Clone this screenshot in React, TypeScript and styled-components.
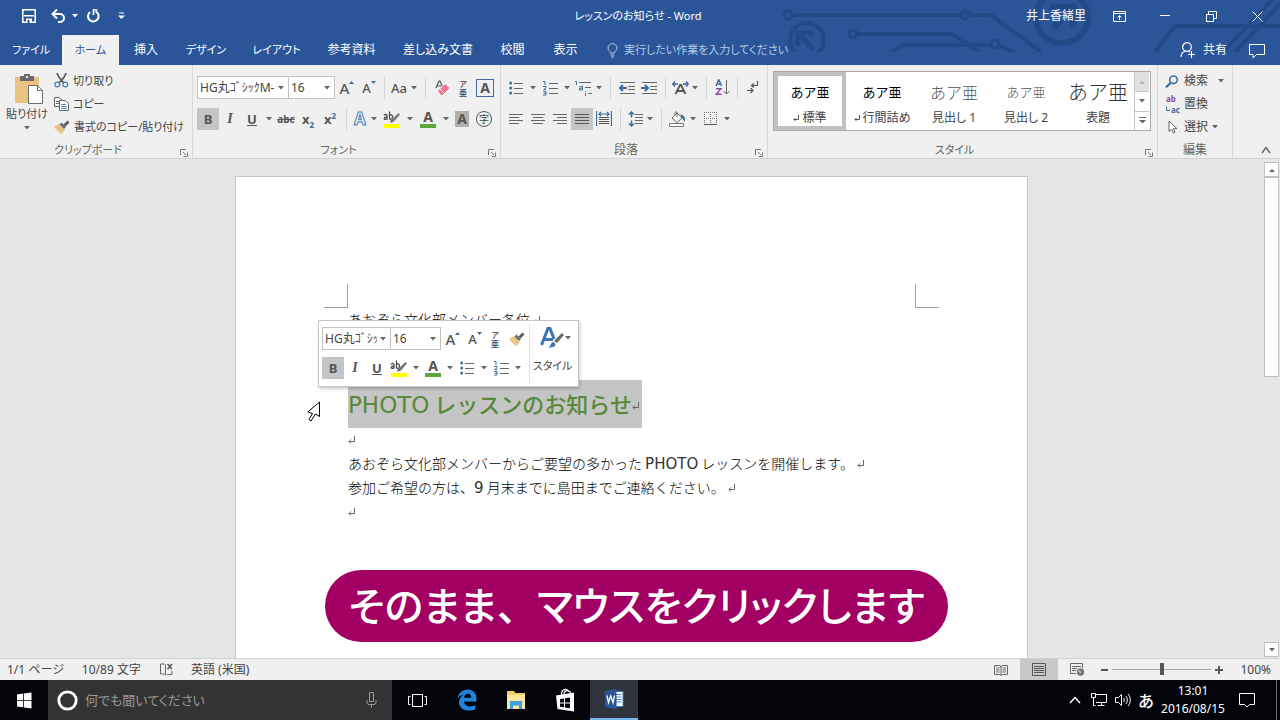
import React from "react";
import styled, { createGlobalStyle } from "styled-components";

const uiFont = `"Noto Sans", "Noto Sans CJK JP", sans-serif`;
const cjkFont = `"Noto Sans CJK JP", sans-serif`;
const blue = "#2a5699";
const ink = "#444444";
const accent = "#3e6d9c";
const headingGreen = "#57893a";

const GlobalStyle = createGlobalStyle`
  *, *::before, *::after { box-sizing: border-box; }
  body { margin: 0; background: #e6e6e6; }
  button, input, select { font: inherit; color: inherit; margin: 0; padding: 0; border: 0; background: none; border-radius: 0; outline: none; font-feature-settings: inherit; }
  svg { display: block; flex: none; }
  p, h1 { margin: 0; }
`;

const Screen = styled.div`
  display: flex;
  flex-direction: column;
  height: 100vh;
  min-height: 480px;
  overflow: hidden;
  font: 12px/16px ${uiFont};
  font-feature-settings: "palt";
  color: ${ink};
  white-space: nowrap;
`;

/* ---------- title bar and tabs ---------- */

const Header = styled.header`
  position: relative;
  background: ${blue};
  color: #fff;
  flex: none;
`;
const Circuit = styled.svg`
  position: absolute;
  top: 0;
  right: 0;
  pointer-events: none;
`;
const TitleBar = styled.div`
  position: relative;
  display: grid;
  grid-template-columns: 1fr auto 1fr;
  align-items: center;
  height: 32px;
`;
const WindowTitle = styled.span`
  font-size: 11px;
  padding-right: 4px;
`;
const QuickAccess = styled.div`
  display: flex;
  align-items: center;
  padding-left: 17px;
`;
const WindowControls = styled.div`
  display: flex;
  align-items: center;
  justify-content: flex-end;
`;
const UserName = styled.span`
  margin-right: 10px;
`;
const BarButton = styled.button<{ $w: number }>`
  width: ${(p) => p.$w}px;
  height: 32px;
  display: flex;
  align-items: center;
  justify-content: center;
`;
const TabRow = styled.nav`
  position: relative;
  display: flex;
  align-items: stretch;
  height: 33px;
  padding-top: 3px;
`;
const Tab = styled.button<{ $w: number; $active?: boolean; $kana?: boolean }>`
  width: ${(p) => p.$w}px;
  text-align: center;
  font-size: ${(p) => (p.$kana ? 11 : 12)}px;
  background: ${(p) => (p.$active ? "#f0f0f0" : "transparent")};
  color: ${(p) => (p.$active ? blue : "#fff")};
`;
const TellMe = styled.label`
  display: flex;
  align-items: center;
  gap: 6px;
  margin-left: 14px;
  color: #b9cbe6;
  font-size: 11px;
  flex: 1;
  input { width: 200px; }
  input::placeholder { color: #b9cbe6; opacity: 1; }
`;
const Share = styled.button`
  display: flex;
  align-items: center;
  gap: 7px;
  margin-right: 7px;
`;

/* ---------- ribbon ---------- */

const Ribbon = styled.section`
  display: flex;
  flex: none;
  height: 94px;
  background: #f0f0f0;
  border-bottom: 1px solid #d2d2d2;
`;
const Group = styled.div<{ $w: number }>`
  width: ${(p) => p.$w}px;
  flex: none;
  display: flex;
  flex-direction: column;
  gap: 2px;
  padding: 2px 4px 0;
  border-right: 1px solid #d8d8d8;
`;
const StyleGroup = styled(Group)`
  flex: 0 1 ${(p) => p.$w}px;
`;
const GroupBody = styled.div`
  height: 72px;
  display: flex;
  flex-direction: column;
  justify-content: center;
`;
const GroupFoot = styled.div<{ $kana?: boolean }>`
  display: flex;
  align-items: center;
  text-align: center;
  color: #666;
  height: 17px;
  font-size: ${(p) => (p.$kana ? 11 : 12)}px;
  span { flex: 1; }
  button {
    width: 16px;
    display: flex;
    justify-content: flex-end;
    padding-top: 6px;
  }
`;
const ToolRow = styled.div<{ $h?: number }>`
  display: flex;
  align-items: center;
  height: ${(p) => p.$h || 31}px;
`;
const Tool = styled.button<{ $w: number; $on?: boolean }>`
  width: ${(p) => p.$w}px;
  height: 22px;
  flex: none;
  display: flex;
  align-items: center;
  justify-content: center;
  background: ${(p) => (p.$on ? "#c5c5c5" : "transparent")};
`;
const CaretButton = styled.button`
  width: 12px;
  height: 22px;
  flex: none;
  display: flex;
  align-items: center;
  justify-content: center;
`;
const Divider = styled.span`
  width: 1px;
  height: 22px;
  margin: 0 5px;
  background: #d4d4d4;
  flex: none;
`;
const Glyph = styled.span<{ $size?: number; $bold?: boolean; $italic?: boolean; $line?: string; $serif?: boolean }>`
  font-size: ${(p) => p.$size || 14}px;
  line-height: 16px;
  font-weight: ${(p) => (p.$bold ? 700 : 500)};
  font-style: ${(p) => (p.$italic ? "italic" : "normal")};
  font-family: ${(p) => (p.$serif ? `"Liberation Serif", serif` : uiFont)};
  text-decoration: ${(p) => p.$line || "none"};
  color: #555;
  sub, sup { font-size: 8px; line-height: 1px; color: ${accent}; }
`;
const ShadedGlyph = styled(Glyph)<{ $boxed?: boolean }>`
  width: ${(p) => (p.$boxed ? 16 : 14)}px;
  background: ${(p) => (p.$boxed ? "transparent" : "#b0b0b0")};
  outline: ${(p) => (p.$boxed ? `1px solid ${accent}` : "none")};
  text-align: center;
`;
const CircledGlyph = styled.span`
  width: 16px;
  height: 16px;
  border: 1px solid #555;
  border-radius: 50%;
  font: 10px/14px ${cjkFont};
  text-align: center;
`;
const OutlineGlyph = styled(Glyph)`
  color: #f4f8fd;
  -webkit-text-stroke: 1px #4a80b8;
`;
const SwatchGlyph = styled.span<{ $swatch: string }>`
  width: 16px;
  height: 18px;
  border-bottom: 4px solid ${(p) => p.$swatch};
  display: flex;
  align-items: center;
  justify-content: center;
`;
const Ruby = styled.span`
  display: flex;
  flex-direction: column;
  align-items: center;
  font: 500 8px/9px ${cjkFont};
`;
const Combo = styled.span<{ $w: number }>`
  position: relative;
  width: ${(p) => p.$w}px;
  height: 23px;
  flex: none;
  display: flex;
  border: 1px solid #c3c3c3;
  background: #fff;
  & + & { margin-left: -1px; }
  select {
    appearance: none;
    width: 100%;
    height: 21px;
    padding: 0 13px 0 2px;
    line-height: 20px;
    text-overflow: clip;
  }
  svg { position: absolute; right: 4px; top: 9px; pointer-events: none; }
`;
const ClipboardBody = styled(GroupBody)`
  flex-direction: row;
  justify-content: flex-start;
  font-size: 11px;
`;
const GalleryBody = styled(GroupBody)`
  justify-content: flex-start;
  padding-top: 4px;
`;
const EditBody = styled(GroupBody)`
  padding-top: 2px;
`;
const PasteButton = styled.button`
  width: 46px;
  display: flex;
  flex-direction: column;
  align-items: center;
  gap: 1px;
  padding-top: 6px;
  svg:first-child { margin-left: 4px; }
  svg:last-child { margin-top: 3px; }
`;
const Stack = styled.div`
  display: flex;
  flex-direction: column;
  margin: 2px 0 0 4px;
`;
const TextTool = styled.button`
  display: flex;
  align-items: center;
  gap: 4px;
  height: 23px;
`;
const Gallery = styled.div`
  display: flex;
  height: 60px;
  margin: 0 2px 0 1px;
  border: 1px solid #ababab;
  background: #fff;
`;
const StyleCard = styled.button<{ $on?: boolean }>`
  width: 72px;
  border: 4px solid ${(p) => (p.$on ? "#c0c0c0" : "#fff")};
  display: flex;
  flex-direction: column;
  align-items: center;
  padding-top: 3px;
  gap: 5px;
  white-space: nowrap;
`;
const Sample = styled.span<{ $size: number; $color: string; $light?: boolean }>`
  font: ${(p) => (p.$light ? 300 : 400)} ${(p) => p.$size}px/26px ${cjkFont};
  font-feature-settings: normal;
  color: ${(p) => p.$color};
`;
const StyleName = styled.span`
  display: flex;
  align-items: center;
  gap: 3px;
  margin: 0 -8px;
  line-height: 16px;
`;
const GalleryScroll = styled.div`
  width: 15px;
  display: grid;
  grid-template-rows: 1fr 1fr 1fr;
  border-left: 1px solid #c6c6c6;
  button { display: flex; align-items: center; justify-content: center; }
  button + button { border-top: 1px solid #c6c6c6; }
  button:first-child { background: #e1e1e1; }
`;
const ReplaceMark = styled.span`
  width: 18px;
  display: flex;
  flex-direction: column;
  font: 700 8px/11px ${uiFont};
  color: #8a4f9f;
  span + span { display: flex; align-items: center; gap: 1px; color: ${accent}; align-self: flex-end; }
`;
const FindRow = styled(TextTool)`
  gap: 5px;
  padding-left: 3px;
  & > svg:last-child { margin-left: 5px; }
`;
const SelectRow = styled(TextTool)`
  gap: 6px;
  padding-left: 6px;
  & > svg:last-child { margin-left: -2px; }
`;
const RibbonEnd = styled.div`
  flex: 1;
  display: flex;
  align-items: flex-end;
  justify-content: flex-end;
  padding: 0 9px 4px;
`;

/* ---------- document ---------- */

const Workspace = styled.main`
  flex: 1;
  min-height: 0;
  display: flex;
  background: #e6e6e6;
`;
const Canvas = styled.div`
  flex: 1;
  overflow: hidden;
  padding-top: 17px;
`;
const Sheet = styled.article`
  position: relative;
  width: 793px;
  min-height: 1122px;
  margin: 0 auto;
  padding: 107px 88px 0;
  background: #fff;
  border: 1px solid #c6c6c6;
`;
const CornerMarks = styled.div`
  display: flex;
  justify-content: space-between;
`;
const CornerMark = styled.span<{ $side: "left" | "right" }>`
  width: 24px;
  height: 24px;
  border: 0 solid #a0a0a0;
  border-bottom-width: 1px;
  ${(p) => (p.$side === "left" ? "border-right-width: 1px;" : "border-left-width: 1px;")}
`;
const Body = styled.div`
  padding: 0 24px;
  font: 300 14px/22px ${cjkFont};
  font-feature-settings: normal;
  color: #000;
`;
const Line = styled.p`
  height: 24px;
  padding-bottom: 2px;
  display: flex;
  align-items: center;
  gap: 3px;
  svg { margin-top: 2px; }
`;
const Latin = styled.span`
  font-family: "DejaVu Sans", sans-serif;
  font-size: 15px;
  font-weight: 400;
  color: #333;
`;
const Heading = styled.h1`
  width: fit-content;
  height: 48px;
  padding-right: 3px;
  display: flex;
  align-items: center;
  background: #c5c5c5;
  color: ${headingGreen};
  font: 500 22px/48px ${cjkFont};
  ${Latin} { font-size: 23px; color: inherit; }
  svg { margin-top: 4px; }
`;
const MiniToolbar = styled.div`
  position: absolute;
  left: 82px;
  top: 143px;
  width: 261px;
  height: 67px;
  padding: 3px;
  display: flex;
  background: #fff;
  border: 1px solid #c6c6c6;
  box-shadow: 1px 2px 3px rgba(0, 0, 0, 0.2);
`;
const MiniTools = styled.div`
  width: 208px;
  border-right: 1px solid #e0e0e0;
`;
const MiniStyle = styled.button`
  flex: 1;
  display: flex;
  flex-direction: column;
  align-items: center;
  gap: 9px;
  padding-top: 3px;
  font-size: 11px;
  span { display: flex; align-items: center; gap: 1px; margin-left: 6px; }
`;
const Pointer = styled.svg`
  position: absolute;
  left: 71px;
  top: 224px;
`;
const Caption = styled.div`
  position: absolute;
  left: 89px;
  top: 393px;
  width: 623px;
  height: 72px;
  border-radius: 36px;
  background: #a30063;
  color: #fff;
  font: 500 40px/68px ${cjkFont};
  font-feature-settings: "palt";
  text-align: center;
  span { font-feature-settings: normal; }
`;
const ScrollBar = styled.div`
  width: 17px;
  padding: 3px 1px 1px 1px;
  display: flex;
  flex-direction: column;
  button {
    height: 15px;
    display: flex;
    align-items: center;
    justify-content: center;
    background: #fff;
    border: 1px solid #c0c0c0;
  }
`;
const ScrollTrack = styled.div`
  flex: 1;
`;
const ScrollThumb = styled.div`
  height: 43%;
  background: #fff;
  border: 1px solid #c0c0c0;
`;

/* ---------- status bar ---------- */

const StatusBar = styled.footer`
  flex: none;
  display: flex;
  align-items: center;
  height: 22px;
  padding: 0 9px 0 7px;
  background: #f0f0f0;
  border-top: 1px solid #d2d2d2;
`;
const StatusItems = styled.div`
  flex: 1;
  display: flex;
  align-items: center;
  gap: 18px;
`;
const ViewButton = styled.button<{ $on?: boolean }>`
  width: 38px;
  height: 21px;
  display: flex;
  align-items: center;
  justify-content: center;
  background: ${(p) => (p.$on ? "#c8c8c8" : "transparent")};
`;
const ZoomStep = styled.button`
  width: 16px;
  height: 20px;
  display: flex;
  align-items: center;
  justify-content: center;
`;
const ZoomSlider = styled.input`
  appearance: none;
  width: 99px;
  height: 20px;
  &::-webkit-slider-runnable-track { height: 1px; background: #a8a8a8; }
  &::-webkit-slider-thumb { appearance: none; width: 4px; height: 12px; margin-top: -6px; background: #555; }
`;
const ZoomValue = styled.span`
  width: 44px;
  text-align: right;
`;

/* ---------- task bar ---------- */

const TaskBar = styled.footer`
  flex: none;
  display: flex;
  height: 40px;
  background: #02040a;
  color: #fff;
`;
const TaskButton = styled.button<{ $w?: number; $active?: boolean }>`
  width: ${(p) => p.$w || 48}px;
  height: 40px;
  display: flex;
  align-items: center;
  justify-content: center;
  background: ${(p) => (p.$active ? "#2f343f" : "transparent")};
  border-bottom: ${(p) => (p.$active ? "2px solid #76b9ed" : "0")};
`;
const Cortana = styled.label`
  width: 344px;
  display: flex;
  align-items: center;
  gap: 6px;
  padding: 0 12px 0 8px;
  background: #333;
  color: #9a9a9a;
  font-size: 13px;
  input { flex: 1; min-width: 0; }
  input::placeholder { color: #9a9a9a; opacity: 1; }
`;
const Apps = styled.div`
  flex: 1;
  display: flex;
  gap: 1px;
  padding-left: 2px;
`;
const Tray = styled.div`
  display: flex;
  align-items: center;
  padding-right: 8px;
`;
const Ime = styled.span`
  font: 500 16px/20px ${cjkFont};
`;
const Clock = styled.time`
  width: 72px;
  text-align: center;
  line-height: 18px;
`;
const DesktopEdge = styled.button`
  width: 4px;
  height: 40px;
  margin-left: 3px;
  border-left: 1px solid #6a6c70;
`;

/* ---------- icons ---------- */

type BoxProps = { w: number; h: number; children: React.ReactNode };
const Icon = ({ w, h, children }: BoxProps) => (
  <svg width={w} height={h} viewBox={`0 0 ${w} ${h}`} fill="none" aria-hidden="true">
    {children}
  </svg>
);
const Caret = ({ color = "#666", up = false }: { color?: string; up?: boolean }) => (
  <Icon w={6} h={4}>
    <path d={up ? "M0 4 3 1 6 4z" : "M0 0h6L3 3.5z"} fill={color} />
  </Icon>
);
const SaveIcon = () => (
  <Icon w={14} h={14}>
    <path d="M.8.8h12.400v12.400H.8z" stroke="#fff" strokeWidth="1.600" />
    <path d="M2 6h10v1.600H2zM4 9.500h6V14H4z" fill="#fff" />
    <path d="M5.500 11h2v3h-2z" fill={blue} />
  </Icon>
);
const UndoIcon = () => (
  <Icon w={15} h={14}>
    <path d="M2 5h7a4 4 0 0 1 0 8H7" stroke="#fff" strokeWidth="2" />
    <path d="M6 .5 1.500 5 6 9.500" stroke="#fff" strokeWidth="2" />
  </Icon>
);
const RedoIcon = () => (
  <Icon w={14} h={14}>
    <path d="M4 3A5.300 5.300 0 1 0 9.600 2.400" stroke="#fff" strokeWidth="2" />
    <path d="M11.500 1H7.500v5" stroke="#fff" strokeWidth="1.700" />
  </Icon>
);
const CustomizeIcon = () => (
  <Icon w={7} h={8}>
    <path d="M1 1h5" stroke="#fff" />
    <path d="M0 3.500h7L3.500 7z" fill="#fff" />
  </Icon>
);
const RibbonModeIcon = () => (
  <Icon w={13} h={11}>
    <path d="M.5.5h12v10H.5zM.5 2.500h12M6.500 9V4.500M4.500 6.500l2-2 2 2" stroke="#fff" />
  </Icon>
);
const MinimizeIcon = () => (
  <Icon w={11} h={2}>
    <path d="M0 .5h10" stroke="#fff" />
  </Icon>
);
const RestoreIcon = () => (
  <Icon w={11} h={11}>
    <path d="M.5 3.500h7v7h-7zM2.500 3V.5h8v7H8" stroke="#fff" />
  </Icon>
);
const CloseIcon = () => (
  <Icon w={11} h={11}>
    <path d="m.5.5 10 10M10.500.5l-10 10" stroke="#fff" />
  </Icon>
);
const BulbIcon = () => (
  <Icon w={11} h={15}>
    <path d="M3.500 10c0-2-2.500-2.500-2.500-5a4.500 4.300 0 0 1 9 0c0 2.500-2.500 3-2.500 5zM3.500 12h4M4 14h3" stroke="#b9cbe6" />
  </Icon>
);
const PersonIcon = () => (
  <Icon w={16} h={16}>
    <circle cx="7" cy="5" r="4.300" stroke="#fff" strokeWidth="1.200" />
    <path d="M1 15c.3-3.500 2-5.600 4.800-6M8.500 9.300l1.500.9M11.500 9v7M8 12.500h7" stroke="#fff" strokeWidth="1.200" />
  </Icon>
);
const CommentIcon = () => (
  <Icon w={17} h={15}>
    <path d="M.5.5h15v10H7.500L4 14v-3.500H.5z" stroke="#fff" />
  </Icon>
);
const CircuitArt = () => (
  <Circuit width="520" height="52" viewBox="0 0 520 52" fill="none" stroke="#224a86" strokeWidth="4" aria-hidden="true">
    <path d="M32 15h169M209 15h22l50 37M97 34h95l27 18M131 52l12-7h88M239 46l18 7" />
    <path d="m395 52 20-26h105M463 52 512 0M475 52 524 0" />
    <g strokeWidth="3">
      <circle cx="28" cy="15" r="4" />
      <circle cx="205" cy="15" r="4" />
      <circle cx="93" cy="34" r="4" />
      <circle cx="235" cy="44" r="4" />
    </g>
    <circle cx="47" cy="40" r="17" />
    <path d="M38 46V33h15M40 35l13 14" strokeWidth="5" />
    <circle cx="302" cy="17" r="26" strokeWidth="6" />
    <path d="M290 7h23v20M311 9l-18 19" strokeWidth="7" />
  </Circuit>
);
const LauncherIcon = () => (
  <Icon w={8} h={8}>
    <path d="M.5 6V.5H6M3 3l3 3M7.500 3.500v4h-4" stroke="#777" />
  </Icon>
);
const PasteIcon = () => (
  <Icon w={30} h={32}>
    <path d="M1 4h24v26H1z" fill="#eac282" />
    <path d="M6 3h4V1h6v2h4v5H6z" fill="#6a6a6a" />
    <path d="M12 3h2v2h-2z" fill="#f0f0f0" />
    <path d="M14.500 12.500h9l5 5v13h-14z" fill="#fff" stroke="#6a6a6a" />
    <path d="M23.500 12.500v5h5" stroke="#6a6a6a" />
  </Icon>
);
const CutIcon = () => (
  <Icon w={15} h={15}>
    <path d="M3 0c1 4 3 6 7 10M12 0c-1 4-3 6-7 10" stroke="#5f5f5f" strokeWidth="1.800" />
    <circle cx="3.300" cy="11.500" r="2.400" stroke="#4a80b8" strokeWidth="1.300" />
    <circle cx="11.300" cy="11.500" r="2.400" stroke="#4a80b8" strokeWidth="1.300" />
  </Icon>
);
const CopyIcon = () => (
  <Icon w={15} h={14}>
    <path d="M.5.5h5l2 2v7h-7zM2 4.500h4M2 6.500h4" stroke="#666" />
    <path d="M5.500 3.500h6l3 3v7h-9z" fill="#fff" stroke="#666" />
    <path d="M7 7.500h5M7 9.500h6M7 11.500h6" stroke="#5a8abb" />
  </Icon>
);
const BrushIcon = () => (
  <Icon w={16} h={14}>
    <path d="M0 7 5 4l6 6-4 4C5 12 3 11 0 7z" fill="#eac282" />
    <path d="m5.500 4.500 2-2L12 7l-2 2z" fill="#6a6a6a" />
    <path d="m9.500 4.500 4-4 2 2-4 4z" fill="#5a5a5a" />
  </Icon>
);
const EraserIcon = () => (
  <Icon w={15} h={16}>
    <path d="m1 8 3-7h1l2 5M2 6h4" stroke="#555" strokeWidth="1.200" />
    <path d="m3 11 7-7 4.500 4-7 7H6z" fill="#e8798c" />
    <path d="m5 9 4.500 4.500" stroke="#fbe3e6" />
  </Icon>
);
const bulletRows = [2, 7, 12];
const BulletsIcon = () => (
  <Icon w={14} h={14}>
    {bulletRows.map((y) => (
      <React.Fragment key={y}>
        <circle cx="1.700" cy={y} r="1.500" fill={accent} />
        <path d={`M5 ${y + 0.5}h9`} stroke="#666" />
      </React.Fragment>
    ))}
  </Icon>
);
const NumbersIcon = () => (
  <Icon w={15} h={16}>
    <path d="M0 1.500h2V5M0 6.500h3v1.300L.7 9.500H3M0 11.500h3v3.500H0M.8 13.200H3" stroke={accent} />
    <path d="M6 3.500h9M6 8.500h9M6 13.500h9" stroke="#666" />
  </Icon>
);
const MultiLevelIcon = () => (
  <Icon w={17} h={16}>
    <path d="M0 1.500h1.500V5M4.500 6.500h3V10h-3V8.200h3M10.500 11v1M10.500 13v3" stroke={accent} />
    <path d="M4 2.500h12M10 7.500h6M13 13.500h4" stroke="#666" />
  </Icon>
);
const IndentIcon = ({ out = false }: { out?: boolean }) => (
  <Icon w={17} h={14}>
    <path d="M1 1.500h15M9 5.500h7M9 8.500h7M1 12.500h15" stroke="#666" />
    <path d={out ? "M1 7h7M4 4 1 7l3 3" : "M0 7h7M4 4l3 3-3 3"} stroke={accent} strokeWidth="2" />
  </Icon>
);
const AsianLayoutIcon = () => (
  <Icon w={17} h={15}>
    <path d="M3.500 14 8 5h1l4.500 9M5.500 11h6" stroke="#555" strokeWidth="1.800" />
    <path d="M1 4h5M3 1.500.7 4 3 6.500M11 4h5M14 1.500 16.300 4 14 6.500" stroke={accent} strokeWidth="1.500" />
  </Icon>
);
const SortIcon = () => (
  <Icon w={15} h={17}>
    <path d="m1 7 2.500-6h.5l2.500 6M2 5h4" stroke={accent} strokeWidth="1.400" />
    <path d="M1 9.700h5L1.200 15.300H6.500" stroke="#8a4f9f" strokeWidth="1.400" />
    <path d="M11.500 1v14M8.500 12l3 3 3-3" stroke="#666" />
  </Icon>
);
const MarksIcon = () => (
  <Icon w={12} h={13}>
    <path d="M10.500 0v4.500H5M7 2.500l-2.500 2L7 6.500M0 9.500h5.500M3.500 7l2.500 2.500L3.500 12" stroke="#555" strokeWidth="1.200" />
  </Icon>
);
const AlignIcon = ({ indent }: { indent: number }) => (
  <Icon w={14} h={12}>
    <path d={`M0 1.500h14M${indent} 4.500h10M0 7.500h14M${indent} 10.500h10`} stroke="#666" />
  </Icon>
);
const JustifyIcon = () => (
  <Icon w={14} h={12}>
    <path d="M0 1.500h14M0 4.500h14M0 7.500h14M0 10.500h14" stroke="#555" />
  </Icon>
);
const DistributeIcon = () => (
  <Icon w={16} h={15}>
    <path d="M.5 0v15M15.500 0v15M3 3h10M5 1 3 3l2 2M11 1l2 2-2 2" stroke={accent} strokeWidth="1.200" />
    <path d="M3 6.500h10M3 8.500h10M3 10.500h10M3 12.500h10" stroke="#555" />
  </Icon>
);
const LineSpacingIcon = () => (
  <Icon w={15} h={16}>
    <path d="M3.500 1v5.500M1 3.500 3.500 1 6 3.500M3.500 9.500V15M1 12.500 3.500 15 6 12.500" stroke={accent} strokeWidth="1.500" />
    <path d="M7 3.500h8M7 6.500h8M7 9.500h8M7 12.500h8" stroke="#666" />
  </Icon>
);
const BucketIcon = () => (
  <Icon w={17} h={16}>
    <path d="m3 7 5-5 5 5-5 4.500z" fill="#fff" stroke="#666" />
    <path d="M8 6V1.500C8 .5 6 .5 6 2v2" stroke="#666" />
    <path d="M11 3.500c4 .5 6 3 4.500 7.500-1-1.500-1.500-3-2.500-4z" fill={accent} />
    <path d="M.5 12.500h14v3H.5z" fill="#fff" stroke="#777" />
  </Icon>
);
const BordersIcon = () => (
  <Icon w={13} h={13}>
    <path d="M.5 0v12M6.500 0v12M12.500 0v12M0 .5h13M0 6.500h13" stroke="#777" strokeDasharray="1 1" />
    <path d="M0 12.500h13" stroke="#555" />
  </Icon>
);
const HighlighterIcon = () => (
  <Icon w={18} h={18}>
    <path d="M1 5.500c.5-1.500 3-1.500 3 0V9.500M4 7.200c-3-.5-3.500 2.300-2 2.300.8 0 1.500-.4 2-1M6.500 1.500v8M6.500 6c2-2.500 4-.5 2.500 2.500-.8 1.300-2 1-2.500 0" stroke="#444" strokeWidth="1.200" />
    <path d="M8 10 15.500 3l1.500 1.500-6 7z" fill="#777" />
    <path d="m8 10 3 1.500-4 1z" fill="#444" />
    <path d="M1 14h16v4H1z" fill="#ffff00" />
  </Icon>
);
const SearchIcon = () => (
  <Icon w={14} h={13}>
    <circle cx="8.500" cy="4.800" r="3.800" stroke={accent} strokeWidth="1.600" />
    <path d="M5.800 7.800 1 12.300" stroke={accent} strokeWidth="2.200" />
  </Icon>
);
const SelectIcon = () => (
  <Icon w={10} h={14}>
    <path d="M1 1v10.500l2.600-2.300L5.300 13l1.700-.8-1.600-3.500H9z" fill="#fff" stroke="#666" />
  </Icon>
);
const StylesIcon = () => (
  <Icon w={24} h={22}>
    <path d="M1.500 18 8 1.500h2L14 12M4.500 12.500H13" stroke="#3a74b4" strokeWidth="3" />
    <path d="m14 14 8-8 2 2-7 8z" fill="#666" />
    <path d="M7 21c3 0 3-6 6.500-6.500L16 17c0 3-4 4.500-9 4z" fill="#3a74b4" stroke="#fff" />
  </Icon>
);
const ReturnMark = () => (
  <Icon w={7} h={8}>
    <path d="M6.500 0v5.500H1M3 3.500l-2 2 2 2" stroke="#666" />
  </Icon>
);
const StyleReturn = () => (
  <Icon w={6} h={6}>
    <path d="M5.500 0v4.500H1M2.500 3 1 4.500 2.500 6" stroke="#555" />
  </Icon>
);
const ProofIcon = () => (
  <Icon w={14} h={13}>
    <path d="M6.500 12.500V2L5.500 1h-4v10h4l1 1M8 11.500h5V8" stroke="#666" />
    <path d="m8.500 1 4.500 5M13 1 8.500 6" stroke="#555" strokeWidth="1.500" />
  </Icon>
);
const ReadIcon = () => (
  <Icon w={14} h={12}>
    <path d="M.5 1.500h5l1.500 1 1.500-1h5v9h-5l-1.500 1-1.500-1h-5zM7 2v9M2 4h3.500M2 6h3.500M2 8h3.500M8.500 4H12M8.500 6H12M8.500 8H12" stroke="#666" />
  </Icon>
);
const PrintIcon = () => (
  <Icon w={14} h={13}>
    <path d="M.5.5h13v12H.5zM2 3.500h10M2 5.500h10M2 7.500h10M2 9.500h10" stroke="#555" />
  </Icon>
);
const WebIcon = () => (
  <Icon w={15} h={13}>
    <path d="M6 10.500H.5V.5h12V5M2 3.500h9M2 5.500h5M2 7.500h4" stroke="#666" />
    <circle cx="10.500" cy="9" r="3.700" fill="#777" />
    <path d="M8.500 8c1.500-.5 2 1 1.500 2" stroke="#fff" />
  </Icon>
);
const WindowsIcon = () => (
  <Icon w={16} h={17}>
    <path d="M1 2.500 7 1.600V8H1zM7.800 1.500 15.500.4V8H7.800zM1 8.800h6v6.400L1 14.400zM7.800 8.800h7.700v7.700L7.800 15.400z" fill="#fff" />
  </Icon>
);
const CortanaRing = () => (
  <Icon w={23} h={23}>
    <circle cx="11.500" cy="11.500" r="8.700" stroke="#fff" strokeWidth="2.800" />
  </Icon>
);
const MicIcon = () => (
  <Icon w={17} h={18}>
    <path d="M6.500 1.500h4v9h-4zM4 9v2.500a2 2 0 0 0 2 2h5a2 2 0 0 0 2-2V9M8.500 14v2.500" stroke="#9a9a9a" />
  </Icon>
);
const TaskViewIcon = () => (
  <Icon w={21} h={13}>
    <path d="M4.500.5h10v12h-10zM2.500 2.500H.5v8h2M16.500 2.500h2v8h-2" stroke="#fff" />
  </Icon>
);
const EdgeIcon = () => (
  <Icon w={22} h={22}>
    <path
      d="M1.500 9.500C2.500 3.500 7 .5 11.500.5c6 0 9 4.500 9 9v3H8c.2 3.500 3.300 5 6 5 2 0 3.800-.5 5.300-1.400v4.100c-2 1-4.300 1.400-6.600 1.400C7 21.600 3 18 3 13.500c0-4 2.500-6.500 5-7.800-3 .3-5.200 1.800-6.500 3.800zM8 8.800h7.300c0-2.500-1.300-4-3.500-4S8.400 6.500 8 8.800z"
      fill="#1f83dc"
    />
  </Icon>
);
const FolderIcon = () => (
  <Icon w={20} h={20}>
    <path d="M1 1h7l1.500 2H19v16H1z" fill="#f4cf6b" />
    <path d="M1 5h18v14H1z" fill="#fbe5a0" />
    <path d="M4 11h12v8h-3v-3.500H7V19H4z" fill="#37a3de" />
  </Icon>
);
const StoreIcon = () => (
  <Icon w={21} h={24}>
    <path d="M6.500 7C6 .5 13 0 13.500 4M9 6c0-4.500 7-4 6.500-.5" stroke="#fff" strokeWidth="1.200" />
    <path d="m1 7.500 18-3V23.500L2.500 21z" fill="#fff" />
    <path d="m5 11 4-.5v4H5zM10 10.300l5-.7v4.900h-5zM5 15.500h4v3.800L5 18.700zM10 15.500h5v4.700l-5-.7z" fill="#02040a" />
  </Icon>
);
const WordIcon = () => (
  <Icon w={20} h={22}>
    <path d="M10.500 3.500h8.500v15h-8.500z" fill="#fff" stroke="#4a7cc9" />
    <path d="M12 6.500h5.500M12 9h5.500M12 11.500h5.500M12 14h5.500" stroke="#4a7cc9" />
    <path d="M1 3 12.500.8v20.400L1 19z" fill="#2a5699" />
    <path d="m3 7.500 1.500 7L6.700 8l2.300 6.500 1.500-7" stroke="#fff" strokeWidth="1.300" />
  </Icon>
);
const ChevronUp = ({ color = "#fff", w = 12 }: { color?: string; w?: number }) => (
  <Icon w={w} h={8}>
    <path d={`M1 7 ${w / 2} 1.500 ${w - 1} 7`} stroke={color} strokeWidth="1.400" />
  </Icon>
);
const NetworkIcon = () => (
  <Icon w={17} h={14}>
    <path d="M4 1.500h11.500v8H5M10.500 9.500v3M6.500 12.500h7M.5.5h4v4h-4zM2.500 4.500v8h2" stroke="#fff" />
  </Icon>
);
const SpeakerIcon = () => (
  <Icon w={17} h={14}>
    <path d="M.5 4.500h3l3-3v11l-3-3h-3zM8.500 5c1 1 1 3 0 4M10.800 3c2 2 2 6 0 8M13 1c3 3 3 9 0 12" stroke="#fff" />
  </Icon>
);
const NoticeIcon = () => (
  <Icon w={17} h={17}>
    <path d="M.5 1.500h15v11h-5L8 15l-2.500-2.500h-5z" stroke="#fff" />
  </Icon>
);
const SizeMark = ({ up }: { up: boolean }) => (
  <Icon w={5} h={16}>
    <path d={up ? "M0 4h5L2.500 1z" : "M0 1h5L2.500 4z"} fill={accent} />
  </Icon>
);

/* ---------- composed parts ---------- */

const Drop = ({ label }: { label: string }) => (
  <CaretButton aria-label={label}>
    <Caret />
  </CaretButton>
);
const Select = ({ label, value, w }: { label: string; value: string; w: number }) => (
  <Combo $w={w}>
    <select aria-label={label} defaultValue={value}>
      <option>{value}</option>
    </select>
    <Caret />
  </Combo>
);
const Foot = ({ label, kana, launcher = true }: { label: string; kana?: boolean; launcher?: boolean }) => (
  <GroupFoot $kana={kana}>
    <span>{label}</span>
    {launcher && (
      <button aria-label={`${label}の設定`}>
        <LauncherIcon />
      </button>
    )}
  </GroupFoot>
);
const RubyGlyph = () => (
  <Ruby>
    <span>ア</span>
    <span>亜</span>
  </Ruby>
);

const tabs = [
  { name: "ファイル", w: 62, kana: true },
  { name: "ホーム", w: 57, kana: true, active: true },
  { name: "挿入", w: 54 },
  { name: "デザイン", w: 66, kana: true },
  { name: "レイアウト", w: 75, kana: true },
  { name: "参考資料", w: 75 },
  { name: "差し込み文書", w: 98 },
  { name: "校閲", w: 51 },
  { name: "表示", w: 55 },
];

const styleCards = [
  { name: "標準", size: 13, color: "#000", on: true, mark: true },
  { name: "行間詰め", size: 13, color: "#000", mark: true },
  { name: "見出し 1", size: 16, color: "#555", light: true },
  { name: "見出し 2", size: 13, color: "#555", light: true },
  { name: "表題", size: 20, color: "#333", light: true },
];

export default function App() {
  return (
    <Screen>
      <GlobalStyle />
      <Header>
        <CircuitArt />
        <TitleBar>
          <QuickAccess>
            <BarButton $w={24} aria-label="上書き保存"><SaveIcon /></BarButton>
            <BarButton $w={34} aria-label="元に戻す"><UndoIcon /></BarButton>
            <BarButton $w={0} aria-label="元に戻す一覧"><Caret color="#fff" /></BarButton>
            <BarButton $w={36} aria-label="やり直し"><RedoIcon /></BarButton>
            <BarButton $w={20} aria-label="クイックアクセス設定"><CustomizeIcon /></BarButton>
          </QuickAccess>
          <WindowTitle>レッスンのお知らせ - Word</WindowTitle>
          <WindowControls>
            <UserName>井上香緒里</UserName>
            <BarButton $w={46} aria-label="リボンの表示"><RibbonModeIcon /></BarButton>
            <BarButton $w={46} aria-label="最小化"><MinimizeIcon /></BarButton>
            <BarButton $w={46} aria-label="元のサイズ"><RestoreIcon /></BarButton>
            <BarButton $w={46} aria-label="閉じる"><CloseIcon /></BarButton>
          </WindowControls>
        </TitleBar>
        <TabRow>
          {tabs.map((t) => (
            <Tab key={t.name} $w={t.w} $active={t.active} $kana={t.kana}>{t.name}</Tab>
          ))}
          <TellMe>
            <BulbIcon />
            <input aria-label="操作アシスト" placeholder="実行したい作業を入力してください" />
          </TellMe>
          <Share><PersonIcon />共有</Share>
          <BarButton $w={46} aria-label="コメント"><CommentIcon /></BarButton>
        </TabRow>
      </Header>

      <Ribbon>
        <Group $w={193}>
          <ClipboardBody>
            <PasteButton>
              <PasteIcon />
              貼り付け
              <Caret />
            </PasteButton>
            <Stack>
              <TextTool><CutIcon />切り取り</TextTool>
              <TextTool><CopyIcon />コピー</TextTool>
              <TextTool><BrushIcon />書式のコピー/貼り付け</TextTool>
            </Stack>
          </ClipboardBody>
          <Foot label="クリップボード" kana />
        </Group>

        <Group $w={308}>
          <GroupBody>
            <ToolRow>
              <Select label="フォント名" value="HG丸ｺﾞｼｯｸM-" w={92} />
              <Select label="フォントサイズ" value="16" w={47} />
              <Tool $w={24} aria-label="拡大"><Glyph $size={15}>A</Glyph><SizeMark up /></Tool>
              <Tool $w={20} aria-label="縮小"><Glyph $size={13}>A</Glyph><SizeMark up={false} /></Tool>
              <Divider />
              <Tool $w={18} aria-label="文字種の変換"><Glyph $size={13}>Aa</Glyph></Tool>
              <Drop label="文字種の一覧" />
              <Divider />
              <Tool $w={22} aria-label="書式のクリア"><EraserIcon /></Tool>
              <Tool $w={20} aria-label="ルビ"><RubyGlyph /></Tool>
              <Tool $w={24} aria-label="囲み線"><ShadedGlyph $boxed $bold>A</ShadedGlyph></Tool>
            </ToolRow>
            <ToolRow>
              <Tool $w={22} $on aria-label="太字"><Glyph $bold $size={13}>B</Glyph></Tool>
              <Tool $w={22} aria-label="斜体"><Glyph $bold $italic $serif>I</Glyph></Tool>
              <Tool $w={22} aria-label="下線"><Glyph $bold $size={13} $line="underline">U</Glyph></Tool>
              <Drop label="下線の種類" />
              <Tool $w={22} aria-label="取り消し線"><Glyph $size={10} $bold $line="line-through">abc</Glyph></Tool>
              <Tool $w={22} aria-label="下付き"><Glyph $size={13} $bold>x<sub>2</sub></Glyph></Tool>
              <Tool $w={22} aria-label="上付き"><Glyph $size={13} $bold>x<sup>2</sup></Glyph></Tool>
              <Divider />
              <Tool $w={16} aria-label="文字の効果"><OutlineGlyph $size={17} $bold>A</OutlineGlyph></Tool>
              <Drop label="文字の効果一覧" />
              <Tool $w={24} aria-label="蛍光ペン"><HighlighterIcon /></Tool>
              <Drop label="蛍光ペンの色" />
              <Tool $w={24} aria-label="フォントの色"><SwatchGlyph $swatch="#5fa53f"><Glyph $bold>A</Glyph></SwatchGlyph></Tool>
              <Drop label="フォントの色一覧" />
              <Tool $w={20} aria-label="文字の網かけ"><ShadedGlyph $bold>A</ShadedGlyph></Tool>
              <Tool $w={24} aria-label="囲い文字"><CircledGlyph>字</CircledGlyph></Tool>
            </ToolRow>
          </GroupBody>
          <Foot label="フォント" kana />
        </Group>

        <Group $w={267}>
          <GroupBody>
            <ToolRow>
              <Tool $w={22} aria-label="箇条書き"><BulletsIcon /></Tool>
              <Drop label="行頭文字" />
              <Tool $w={22} aria-label="段落番号"><NumbersIcon /></Tool>
              <Drop label="番号の種類" />
              <Tool $w={20} aria-label="アウトライン"><MultiLevelIcon /></Tool>
              <Drop label="リストの種類" />
              <Divider />
              <Tool $w={22} aria-label="インデントを減らす"><IndentIcon out /></Tool>
              <Tool $w={22} aria-label="インデントを増やす"><IndentIcon /></Tool>
              <Divider />
              <Tool $w={18} aria-label="拡張書式"><AsianLayoutIcon /></Tool>
              <Drop label="拡張書式一覧" />
              <Divider />
              <Tool $w={20} aria-label="並べ替え"><SortIcon /></Tool>
              <Divider />
              <Tool $w={20} aria-label="編集記号"><MarksIcon /></Tool>
            </ToolRow>
            <ToolRow>
              <Tool $w={22} aria-label="左揃え"><AlignIcon indent={0} /></Tool>
              <Tool $w={22} aria-label="中央揃え"><AlignIcon indent={2} /></Tool>
              <Tool $w={22} aria-label="右揃え"><AlignIcon indent={4} /></Tool>
              <Tool $w={22} $on aria-label="両端揃え"><JustifyIcon /></Tool>
              <Tool $w={22} aria-label="均等割り付け"><DistributeIcon /></Tool>
              <Divider />
              <Tool $w={18} aria-label="行間"><LineSpacingIcon /></Tool>
              <Drop label="行間一覧" />
              <Divider />
              <Tool $w={20} aria-label="塗りつぶし"><BucketIcon /></Tool>
              <Drop label="塗りつぶしの色" />
              <Tool $w={22} aria-label="罫線"><BordersIcon /></Tool>
              <Drop label="罫線一覧" />
            </ToolRow>
          </GroupBody>
          <Foot label="段落" />
        </Group>

        <StyleGroup $w={390}>
          <GalleryBody>
            <Gallery>
              {styleCards.map((s) => (
                <StyleCard key={s.name} $on={s.on}>
                  <Sample $size={s.size} $color={s.color} $light={s.light}>あア亜</Sample>
                  <StyleName>{s.mark && <StyleReturn />}{s.name}</StyleName>
                </StyleCard>
              ))}
              <GalleryScroll>
                <button aria-label="前のスタイル"><Caret up color="#b5b5b5" /></button>
                <button aria-label="次のスタイル"><Caret /></button>
                <button aria-label="スタイル一覧">
                  <Icon w={7} h={7}><path d="M0 .5h7" stroke="#666" /><path d="M0 3h7L3.500 6.500z" fill="#666" /></Icon>
                </button>
              </GalleryScroll>
            </Gallery>
          </GalleryBody>
          <Foot label="スタイル" kana />
        </StyleGroup>

        <Group $w={75}>
          <EditBody>
            <FindRow><SearchIcon />検索<Caret /></FindRow>
            <TextTool>
              <ReplaceMark>
                <span>ab</span>
                <span>
                  <Icon w={4} h={5}><path d="M.5 0v3.500H4" stroke={accent} /></Icon>
                  ac
                </span>
              </ReplaceMark>
              置換
            </TextTool>
            <SelectRow><SelectIcon />選択<Caret /></SelectRow>
          </EditBody>
          <Foot label="編集" launcher={false} />
        </Group>
        <RibbonEnd>
          <button aria-label="リボンを折りたたむ"><ChevronUp color="#666" w={10} /></button>
        </RibbonEnd>
      </Ribbon>

      <Workspace>
        <Canvas>
          <Sheet>
            <CornerMarks>
              <CornerMark $side="left" />
              <CornerMark $side="right" />
            </CornerMarks>
            <Body>
              <Line>あおぞら文化部メンバー各位<ReturnMark /></Line>
              <Line />
              <Line />
              <Heading>
                <span><Latin>PHOTO</Latin> レッスンのお知らせ</span>
                <ReturnMark />
              </Heading>
              <Line><ReturnMark /></Line>
              <Line>
                <span>あおぞら文化部メンバーからご要望の多かった <Latin>PHOTO</Latin> レッスンを開催します。</span>
                <ReturnMark />
              </Line>
              <Line>
                <span>参加ご希望の方は、<Latin>9</Latin> 月末までに島田までご連絡ください。</span>
                <ReturnMark />
              </Line>
              <Line><ReturnMark /></Line>
            </Body>

            <MiniToolbar>
              <MiniTools>
                <ToolRow $h={29}>
                  <Select label="フォント名" value="HG丸ｺﾞｼｯｸ" w={69} />
                  <Select label="フォントサイズ" value="16" w={51} />
                  <Tool $w={24} aria-label="拡大"><Glyph $size={15}>A</Glyph><SizeMark up /></Tool>
                  <Tool $w={20} aria-label="縮小"><Glyph $size={13}>A</Glyph><SizeMark up={false} /></Tool>
                  <Tool $w={20} aria-label="ルビ"><RubyGlyph /></Tool>
                  <Tool $w={24} aria-label="書式のコピー"><BrushIcon /></Tool>
                </ToolRow>
                <ToolRow $h={30}>
                  <Tool $w={22} $on aria-label="太字"><Glyph $bold $size={13}>B</Glyph></Tool>
                  <Tool $w={22} aria-label="斜体"><Glyph $bold $italic $serif>I</Glyph></Tool>
                  <Tool $w={22} aria-label="下線"><Glyph $bold $size={13} $line="underline">U</Glyph></Tool>
                  <Tool $w={22} aria-label="蛍光ペン"><HighlighterIcon /></Tool>
                  <Drop label="蛍光ペンの色" />
                  <Tool $w={22} aria-label="フォントの色"><SwatchGlyph $swatch="#5fa53f"><Glyph $bold>A</Glyph></SwatchGlyph></Tool>
                  <Drop label="フォントの色一覧" />
                  <Tool $w={22} aria-label="箇条書き"><BulletsIcon /></Tool>
                  <Drop label="行頭文字" />
                  <Tool $w={22} aria-label="段落番号"><NumbersIcon /></Tool>
                  <Drop label="番号の種類" />
                </ToolRow>
              </MiniTools>
              <MiniStyle>
                <span><StylesIcon /><Caret /></span>
                スタイル
              </MiniStyle>
            </MiniToolbar>

            <Pointer width="14" height="21" viewBox="0 0 14 21" aria-hidden="true">
              <path d="M12.500 1v14.500L8.500 13 4 20l-2-1.500 3.500-6L.8 11z" fill="#fff" stroke="#000" />
            </Pointer>
            <Caption>そのまま<span>、</span>マウスをクリックします</Caption>
          </Sheet>
        </Canvas>
        <ScrollBar>
          <button aria-label="上へ"><Caret up /></button>
          <ScrollTrack><ScrollThumb /></ScrollTrack>
          <button aria-label="下へ"><Caret /></button>
        </ScrollBar>
      </Workspace>

      <StatusBar>
        <StatusItems>
          <span>1/1 ページ</span>
          <span>10/89 文字</span>
          <ProofIcon />
          <span>英語 (米国)</span>
        </StatusItems>
        <ViewButton aria-label="閲覧モード"><ReadIcon /></ViewButton>
        <ViewButton $on aria-label="印刷レイアウト"><PrintIcon /></ViewButton>
        <ViewButton aria-label="Webレイアウト"><WebIcon /></ViewButton>
        <ZoomStep aria-label="縮小表示"><Icon w={7} h={2}><path d="M0 0h7v2H0z" fill="#555" /></Icon></ZoomStep>
        <ZoomSlider type="range" aria-label="ズーム" min={0} max={100} defaultValue={50} />
        <ZoomStep aria-label="拡大表示"><Icon w={8} h={8}><path d="M0 3h3V0h2v3h3v2H5v3H3V5H0z" fill="#555" /></Icon></ZoomStep>
        <ZoomValue>100%</ZoomValue>
      </StatusBar>

      <TaskBar>
        <TaskButton aria-label="スタート"><WindowsIcon /></TaskButton>
        <Cortana>
          <CortanaRing />
          <input aria-label="検索" placeholder="何でも聞いてください" />
          <MicIcon />
        </Cortana>
        <Apps>
          <TaskButton aria-label="タスクビュー"><TaskViewIcon /></TaskButton>
          <TaskButton aria-label="Edge"><EdgeIcon /></TaskButton>
          <TaskButton aria-label="エクスプローラー"><FolderIcon /></TaskButton>
          <TaskButton aria-label="ストア"><StoreIcon /></TaskButton>
          <TaskButton $active aria-label="Word"><WordIcon /></TaskButton>
        </Apps>
        <Tray>
          <TaskButton $w={24} aria-label="隠れているインジケーター"><ChevronUp /></TaskButton>
          <TaskButton $w={24} aria-label="ネットワーク"><NetworkIcon /></TaskButton>
          <TaskButton $w={24} aria-label="音量"><SpeakerIcon /></TaskButton>
          <TaskButton $w={22} aria-label="入力モード"><Ime>あ</Ime></TaskButton>
          <Clock>13:01<br />2016/08/15</Clock>
          <TaskButton $w={36} aria-label="通知"><NoticeIcon /></TaskButton>
        </Tray>
        <DesktopEdge aria-label="デスクトップの表示" />
      </TaskBar>
    </Screen>
  );
}
